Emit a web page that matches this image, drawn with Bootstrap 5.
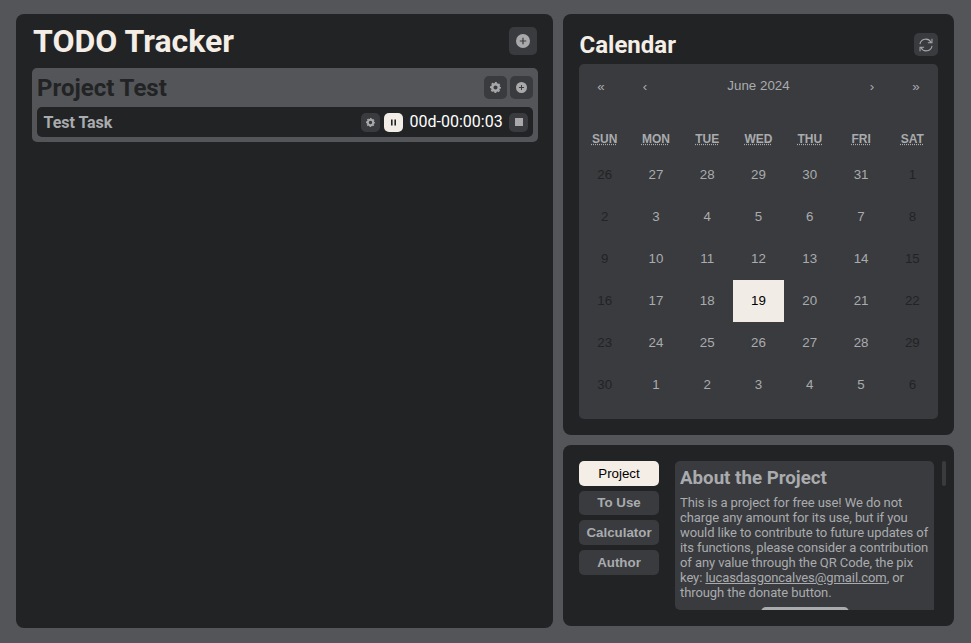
<!DOCTYPE html>
<html lang="en">
<head>
<meta charset="utf-8">
<meta name="viewport" content="width=device-width, initial-scale=1">
<title>TODO Tracker</title>
<link href="https://cdn.jsdelivr.net/npm/bootstrap@5.3.0/dist/css/bootstrap.min.css" rel="stylesheet">
<style>
body{background:#545558;color:#a9abae;font-family:Roboto,sans-serif;padding:14px 17px 15px 16px;height:643px;overflow:hidden}
h1,h2,h3,p{margin:0}
.panel{background:#222325;border-radius:8px}
.tracker{width:537px;height:614px;padding:0 15px 0 16px}
.side{width:391px;gap:10px}
.title{color:#f4eee6;font-weight:700;font-size:32px;line-height:54px;padding-left:1px}
.icon-btn{background:#3a3b3e;border:0;border-radius:5px;padding:0;color:#a9a9ab;display:flex;align-items:center;justify-content:center;flex:none}
.icon-btn.light{background:#f1ece5;color:#222325}
.b28{width:28px;height:28px;margin-right:1px}.b23{width:23px;height:23px}.b19{width:19px;height:19px}
.project{background:#545558;border-radius:5px;height:74px;padding:0 5px}
.project-name{color:#222325;font-size:24px;font-weight:700;line-height:38px;padding-top:1px}
.project-tools{gap:3px}
.task{background:#222325;border-radius:5px;height:30px;padding:0 5px 0 6.500px}
.task-name{font-size:16px;font-weight:700;line-height:28px;padding-top:2px;letter-spacing:-.03px}
.gear-small{margin-right:4px}
.timer{color:#fff;font-size:16px;line-height:28px;width:93px;margin:0 6.500px 0 6.500px;white-space:nowrap}
.cal-panel{height:421px;padding:0 16px}
.cal-bar{height:50px;padding-top:19px}
.cal-title{color:#f4eee6;font-size:24px;font-weight:700;line-height:24px;padding-left:.5px}
.refresh{width:24px;height:23px}
.calendar{background:#3a3b3e;border-radius:5px;height:355px;font:13.333px/16px "Liberation Sans",Arial,sans-serif}
.cal-nav{height:44px}
.cal-nav span{width:44px;text-align:center;padding-top:1px}
.cal-month{padding-bottom:1px}
.cal-week{display:grid;grid-template-columns:repeat(7,1fr);text-align:center}
.cal-week>div{height:42px;line-height:42px}
.cal-head{font-size:12px;font-weight:700;padding-top:18px;height:46px}
.cal-head>div{height:27px;line-height:26px}
.cal-head abbr{text-decoration:underline dotted;cursor:help}
.weekend{color:#222325}
.today{background:#f1ece5;color:#000}
.about-panel{height:181px;padding:16px 8px 16px 16px}
.tabs{width:80px;gap:5px}
.tab-btn{height:24.67px;background:#3a3b3e;border:0;border-radius:5px;padding:0;color:#a9abae;font:bold 13.333px "Liberation Sans",Arial,sans-serif}
.tab-btn.on{background:#f4eee6;color:#000;font-weight:400}
.about{width:259px;height:149px;background:#3a3b3e;border-radius:5px 5px 0 5px;margin-left:16px;padding:6px 5px 0;overflow:hidden;flex:none}
.about h3{font-size:18.72px;font-weight:700;line-height:22px}
.about p{font-size:13px;line-height:15px;padding-top:6px;white-space:nowrap;letter-spacing:-.085px}
.about a{color:inherit}
.donate{width:88px;height:30px;border-radius:5px;background:#a9abae;margin:7px 0 0 80.500px}
.thumb{width:4px;height:25px;border-radius:2px;background:#3a3b3e;margin-left:8px}
</style>
<script src="https://cdn.jsdelivr.net/npm/bootstrap@5.3.0/dist/js/bootstrap.bundle.min.js"></script>
</head>
<body>
<svg class="d-none">
<symbol id="plus" viewBox="0 0 16 16"><path fill="currentColor" fill-rule="evenodd" d="M8 0a8 8 0 1 0 0 16A8 8 0 0 0 8 0zM7.300 4.300h1.400v3h3v1.400h-3v3H7.300v-3h-3V7.300h3z"/></symbol>
<symbol id="gear" viewBox="0 0 16 16"><g fill="none" stroke="currentColor"><circle cx="8" cy="8" r="4.800" stroke-width="3.600"/><circle cx="8" cy="8" r="7" stroke-width="2" pathLength="16" stroke-dasharray="1.100 .9" stroke-dashoffset=".55"/></g></symbol>
</svg>
<div class="d-flex justify-content-between">
  <main class="panel tracker">
    <header class="d-flex justify-content-between align-items-center">
      <h1 class="title">TODO Tracker</h1>
      <button class="icon-btn b28" aria-label="Add project"><svg width="14" height="14"><use href="#plus"/></svg></button>
    </header>
    <section class="project">
      <div class="d-flex justify-content-between align-items-center">
        <h2 class="project-name">Project Test</h2>
        <div class="project-tools d-flex">
          <button class="icon-btn b23" aria-label="Settings"><svg width="11" height="11"><use href="#gear"/></svg></button>
          <button class="icon-btn b23" aria-label="Add task"><svg width="11" height="11"><use href="#plus"/></svg></button>
        </div>
      </div>
      <div class="task d-flex align-items-center">
        <span class="task-name me-auto">Test Task</span>
        <button class="icon-btn b19 gear-small" aria-label="Settings"><svg width="9" height="9"><use href="#gear"/></svg></button>
        <button class="icon-btn b19 light" aria-label="Pause"><svg width="5" height="7"><path d="M0 .5h1.600v6H0zM3.400 .5H5v6H3.400z" fill="currentColor"/></svg></button>
        <span class="timer">00d-00:00:03</span>
        <button class="icon-btn b19" aria-label="Stop"><svg width="8" height="8"><path d="M0 0h8v8H0z" fill="currentColor"/></svg></button>
      </div>
    </section>
  </main>
  <div class="side d-flex flex-column">
    <section class="panel cal-panel">
      <header class="cal-bar d-flex justify-content-between">
        <h2 class="cal-title">Calendar</h2>
        <button class="icon-btn refresh" aria-label="Refresh"><svg width="14" height="14" viewBox="0 0 15 15" fill="none" stroke="currentColor" stroke-width="1.100"><path d="M1 6.500A6.300 6.300 0 0 1 12.800 4.600M13.900 .8v4.300H9.500M14 8.500A6.300 6.300 0 0 1 2.200 10.400M1.100 14.200V9.900H5.500"/></svg></button>
      </header>
      <div class="calendar">
        <div class="cal-nav d-flex align-items-center"><span>«</span><span>‹</span><div class="cal-month flex-fill text-center">June 2024</div><span>›</span><span>»</span></div>
        <div class="cal-week cal-head"><div><abbr>SUN</abbr></div><div><abbr>MON</abbr></div><div><abbr>TUE</abbr></div><div><abbr>WED</abbr></div><div><abbr>THU</abbr></div><div><abbr>FRI</abbr></div><div><abbr>SAT</abbr></div></div>
        <div class="cal-week cal-days">
          <div class="weekend">26</div><div>27</div><div>28</div><div>29</div><div>30</div><div>31</div><div class="weekend">1</div>
          <div class="weekend">2</div><div>3</div><div>4</div><div>5</div><div>6</div><div>7</div><div class="weekend">8</div>
          <div class="weekend">9</div><div>10</div><div>11</div><div>12</div><div>13</div><div>14</div><div class="weekend">15</div>
          <div class="weekend">16</div><div>17</div><div>18</div><div class="today">19</div><div>20</div><div>21</div><div class="weekend">22</div>
          <div class="weekend">23</div><div>24</div><div>25</div><div>26</div><div>27</div><div>28</div><div class="weekend">29</div>
          <div class="weekend">30</div><div>1</div><div>2</div><div>3</div><div>4</div><div>5</div><div class="weekend">6</div>
        </div>
      </div>
    </section>
    <section class="panel about-panel d-flex">
      <nav class="tabs d-flex flex-column">
        <button class="tab-btn on">Project</button><button class="tab-btn">To Use</button><button class="tab-btn">Calculator</button><button class="tab-btn">Author</button>
      </nav>
      <article class="about">
        <h3>About the Project</h3>
        <p>This is a project for free use! We do not<br>charge any amount for its use, but if you<br>would like to contribute to future updates of<br>its functions, please consider a contribution<br>of any value through the QR Code, the pix<br>key: <a href="#">lucasdasgoncalves@gmail.com</a>, or<br>through the donate button.</p>
        <div class="donate"></div>
      </article>
      <div class="thumb"></div>
    </section>
  </div>
</div>
</body>
</html>
